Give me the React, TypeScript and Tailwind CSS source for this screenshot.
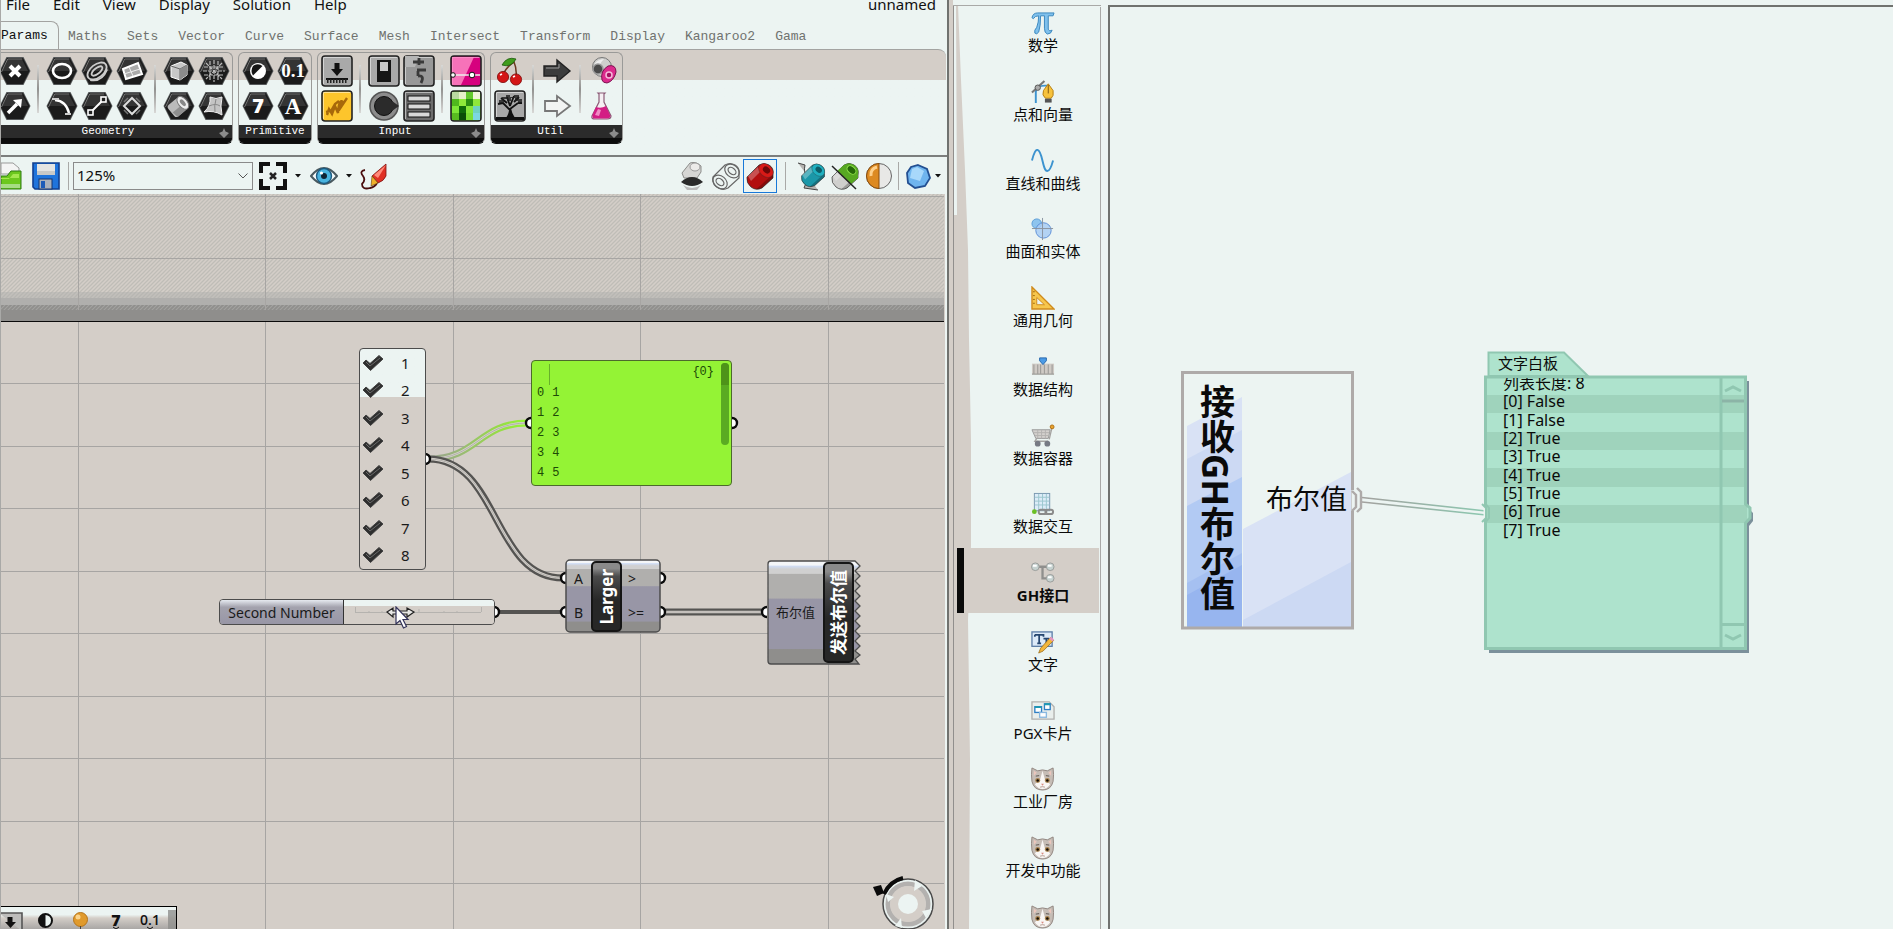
import React, { ReactNode } from "react";

const menuFont = "font-['Noto_Sans','Noto_Sans_CJK_SC',sans-serif]";
const monoFont = "font-['Liberation_Mono',monospace]";

/* ---------- ribbon icons, drawn around the origin ---------- */

function Glyph({ children, label }: { children: ReactNode; label: string }) {
  return (
    <button aria-label={label} className="flex h-[35px] w-[35px] items-center justify-center">
      <svg viewBox="-16 -16 32 32" className="h-8 w-8">{children}</svg>
    </button>
  );
}

function Hex({ children, label }: { children: ReactNode; label: string }) {
  return (
    <Glyph label={label}>
      <polygon points="-15.5,0 -8.5,-14 8.5,-14 15.5,0 8.5,14 -8.5,14" fill="#55585a" />
      <polygon points="-14.6,0 -8,-13 8,-13 14.6,0 8,13 -8,13" fill="#1b1b1b" />
      <polygon points="-13,0 -7,-11.6 7,-11.6 13,0" fill="#343434" />
      <path d="M-13.5,1 L-7.3,-12 H7.3" stroke="#777" fill="none" strokeWidth="1" />
      {children}
    </Glyph>
  );
}

function Tile({ children, label, fill }: { children: ReactNode; label: string; fill: string }) {
  return (
    <Glyph label={label}>
      <rect x="-15" y="-15" width="30" height="30" rx="3" fill={fill} stroke="#222" strokeWidth="1.6" />
      <path d="M-13.5,13 V-13.500 H13.500" stroke="#fff" strokeOpacity=".5" fill="none" />
      {children}
    </Glyph>
  );
}

const geometry: ReactNode[][] = [
  [
    <Hex key="a" label="Point"><path d="M-5,-5 L5,5 M5,-5 L-5,5" stroke="#fff" strokeWidth="4" /></Hex>,
    <Hex key="b" label="Direction"><path d="M-7,7 L2,-2" stroke="#fff" strokeWidth="3.5" /><path d="M-2,-6 L7,-7 L6,2 Z" fill="#fff" /></Hex>,
  ],
  [
    <Hex key="a" label="Circle"><ellipse rx="9" ry="7" fill="none" stroke="#fff" strokeWidth="2.6" /></Hex>,
    <Hex key="b" label="Arc"><path d="M-7,-6 Q4,-5 7,7" stroke="#fff" strokeWidth="2.400" fill="none" /><path d="M-10,-7 H-3 M3,8 H9" stroke="#ccc" strokeWidth="2" /></Hex>,
  ],
  [
    <Hex key="a" label="Curve"><g fill="none" stroke="#ccc" strokeWidth="1.8" transform="rotate(-38)"><ellipse rx="11" ry="6.500" /><ellipse rx="6.5" ry="2.8" /><path d="M-11,3 Q-3,12 9,5" /></g></Hex>,
    <Hex key="b" label="Line"><path d="M-7,7 L7,-7" stroke="#fff" strokeWidth="2" /><g fill="#222" stroke="#fff" strokeWidth="1.6"><rect x="-9" y="4" width="5" height="5" /><rect x="4" y="-9" width="5" height="5" /></g></Hex>,
  ],
  [
    <Hex key="a" label="Plane"><path d="M-9,-2 L6,-8 L10,3 L-6,8 Z" fill="#aaa" stroke="#fff" strokeWidth="2" /><path d="M-3,-4 L1,5 M-8,3 L8,-2" stroke="#eee" /></Hex>,
    <Hex key="b" label="Rectangle"><path d="M0,-8 L8,0 L0,8 L-8,0 Z" fill="none" stroke="#ddd" strokeWidth="2" /><path d="M-8,-4 L-4,-8 M4,-8 L8,-4 M8,4 L4,8 M-4,8 L-8,4" stroke="#777" strokeWidth="1.500" /></Hex>,
  ],
  [
    <Hex key="a" label="Box"><path d="M-8,-5 L2,-9 L8,-6 V4 L1,9 L-8,6 Z" fill="#c8c8c8" stroke="#fff" /><path d="M-8,-5 L1,-2 L8,-6 M1,-2 V9" stroke="#666" fill="none" /><path d="M1,-2 L8,-6 V4 L1,9Z" fill="#8c8c8c" /></Hex>,
    <Hex key="b" label="Brep"><g transform="rotate(-40)"><rect x="-10" y="-7.500" width="15" height="15" rx="3" fill="#bbb" /><path d="M-9,1 H5 V7.500 H-8Z" fill="#8f8f8f" /><ellipse cx="5" rx="4.500" ry="7.500" fill="#eee" stroke="#777" /><ellipse cx="5" rx="2" ry="4" fill="#888" /></g></Hex>,
  ],
  [
    <Hex key="a" label="Mesh"><path d="M-10,-4 H10 M-10,4 H10 M-4,-10 V10 M4,-10 V10 M-8,-8 L8,8 M8,-8 L-8,8 M0,-11 V11 M-11,0 H11" stroke="#bbb" strokeWidth="1.2" strokeDasharray="4 1" /></Hex>,
    <Hex key="b" label="Surface"><path d="M-4,-9 Q2,-6 8,-9 Q6,0 8,9 Q0,4 -10,6 Q-3,0 -4,-9Z" fill="#c4c4c4" stroke="#eee" /><path d="M2,-7 Q0,0 1,6 M-5,0 Q2,-3 6,0" stroke="#888" fill="none" /></Hex>,
  ],
];

const primitive: ReactNode[][] = [
  [
    <Hex key="a" label="Boolean"><circle r="8" fill="#fff" /><path d="M-5,-5 Q0,-8.5 4.5,-5 L-5,4.5 Q-8,0 -5,-5Z" fill="#151515" /></Hex>,
    <Hex key="b" label="Integer"><text y="7" textAnchor="middle" className="font-['Open_Sans',sans-serif] text-[20px] font-extrabold" fill="#fff">7</text></Hex>,
  ],
  [
    <Hex key="a" label="Number"><text y="6" textAnchor="middle" className="font-['Liberation_Serif',serif] text-[19px] font-bold" fill="#fff">0.1</text></Hex>,
    <Hex key="b" label="Text"><text y="8" textAnchor="middle" className="font-['Liberation_Serif',serif] text-[23px] font-bold" fill="#fff">A</text></Hex>,
  ],
];

const greens = ["#b9d9a0", "#e6f0c8", "#63c92c", "#f0f5d8", "#4fb81d", "#8eea3a", "#2a8f12", "#8fe83a", "#7ee637", "#0f6b0a", "#86e83a", "#6fd2c0", "#58bb20", "#0a4f08", "#7adf33", "#7cd7e0"];

const input: ReactNode[][] = [
  [
    <Tile key="a" label="Number slider" fill="#a9a9a9"><path d="M0,-8 V-2" stroke="#111" strokeWidth="5" /><path d="M-6,-2 H6 L0,5Z" fill="#111" /><path d="M-11,8 H11" stroke="#111" strokeWidth="2" /><path d="M-10,10 H11" stroke="#222" strokeWidth="4" strokeDasharray="1.5 1.5" /></Tile>,
    <Tile key="b" label="Graph" fill="#fdc52c"><path d="M-10,9 L-8,3 L-5,8 L-2,0 L1,7 Q2,-8 6,-4 Q-2,6 2,4 L10,-8 M-11,6 L-6,5 L-2,-2 L2,-5" fill="none" stroke="#a8690a" strokeWidth="2.4" /></Tile>,
  ],
  [
    <Tile key="a" label="Switch" fill="#a9a9a9"><rect x="-7" y="-11" width="14" height="22" fill="#151515" /><rect x="-4" y="-9" width="8" height="9" fill="#c9c9c9" /></Tile>,
    <Glyph key="b" label="Knob"><circle r="14" fill="#8c8c8c" stroke="#555" strokeWidth="1.6" /><circle r="9.5" fill="#2b2b2b" stroke="#111" /><path d="M8,-5 L15,0 L8,5Z" fill="#2b2b2b" /></Glyph>,
  ],
  [
    <Tile key="a" label="Panel" fill="#989898"><path d="M-8,-15 H0 L-4,-4 H-14 V-15Z" fill="#b5b5b5" /><path d="M-6,-9 H5 M0,-13 V-6 M-2,-1 H7 M-1,0 V5 M-1,5 Q6,4 2,12" stroke="#3a3a3a" strokeWidth="2.800" fill="none" /></Tile>,
    <Tile key="b" label="Value list" fill="#6d6d6d">{[-10, -2, 6].map((y) => <rect key={y} x="-11" y={y} width="22" height="5" fill="#d8d8d8" stroke="#111" />)}</Tile>,
  ],
  [
    <Tile key="a" label="Gradient" fill="#d6007e"><path d="M-14,-14 H8 L-5,14 H-14Z" fill="#ff8fc8" opacity=".8" /><path d="M-14,4 H14" stroke="#eee" strokeWidth="1.5" /><circle cx="-13" cy="4" r="2.3" fill="#fff" stroke="#111" /><circle cx="6" cy="4" r="2.8" fill="#fff" stroke="#111" /></Tile>,
    <Tile key="b" label="Image" fill="#5cbb22">{greens.map((c, i) => <rect key={i} x={-14 + (i % 4) * 7} y={-14 + Math.floor(i / 4) * 7} width="7" height="7" fill={c} />)}</Tile>,
  ],
];

const util: ReactNode[][] = [
  [
    <Glyph key="a" label="Cherry picker"><path d="M-7,4 Q-4,-4 4,-9 Q7,-2 6,6" fill="none" stroke="#6b3a22" strokeWidth="1.5" /><path d="M-8,-6 Q-3,-15 6,-12 Q1,-3 -8,-6Z" fill="#3f9c1c" stroke="#1d5c0c" strokeWidth=".8" /><circle cx="-7" cy="6" r="5.6" fill="#d41616" stroke="#7b0a0a" strokeWidth=".8" /><circle cx="6" cy="8.5" r="5.6" fill="#d41616" stroke="#7b0a0a" strokeWidth=".8" /><path d="M-10,4 l2,-1 M3,6 l2,-1" stroke="#fff" strokeWidth="1.6" /></Glyph>,
    <Tile key="b" label="Tree" fill="#a8a8a8"><path d="M-14,11 H14 V14 H-14Z" fill="#111" /><path d="M-3,12 Q0,8 0,2 Q1,8 4,12Z M0,4 L-7,-3 M0,3 L8,-3 M0,0 L-3,-9 M0,0 L4,-10 M-3,-3 L-9,-8 M4,-4 L9,-9 M-7,-3 L-12,-2 M8,-3 L12,-3" stroke="#111" strokeWidth="1.800" fill="#111" /><path d="M-11,-6 h3 v-3 h4 v-2 h4 v2 h4 v-2 h5 v4 h3 v4 h-4 v-2 h-3 v-3 h-4 v3 h-4 v-2 h-3 v4 h-5Z" fill="#1d1d1d" opacity=".8" /></Tile>,
  ],
  [
    <Glyph key="a" label="Data input"><path d="M-13,-5 H0 V-11 L13,0 L0,11 V5 H-13Z" fill="#3c3c3c" stroke="#222" strokeWidth="1.4" /><path d="M-11,-3 H2 V-7" stroke="#999" fill="none" /></Glyph>,
    <Glyph key="b" label="Data output"><path d="M-12,-5 H0 V-10 L13,0 L0,10 V5 H-12Z" fill="#f2f4f3" stroke="#777" strokeWidth="1.8" /></Glyph>,
  ],
  [
    <Glyph key="a" label="Colour picker"><g transform="translate(-3 -1)"><circle cx="1" cy="-3" r="9.500" fill="#cfcfcd" stroke="#777" /><path d="M-7,2 Q-9,-10 3,-11 Q-2,-6 -2,-1Z" fill="#eee" /><circle cx="-3" cy="-1" r="5" fill="#4a4a4a" stroke="#999" strokeWidth="1.500" /><path d="M1,10 Q-1,1 7,-4 Q15,-6 15,2 Q13,11 6,13Q2,13 1,10Z" fill="#dc2a8c" stroke="#7d1250" /><circle cx="8" cy="5" r="3" fill="#a30f60" stroke="#f6b9da" strokeWidth="1.500" /></g></Glyph>,
    <Glyph key="b" label="Flask"><g transform="translate(-3 0)"><path d="M-3,-13 H4 L3,-12 V-4 L10,10 Q10,13 6,13 H-6 Q-10,13 -9,10 L-2,-4 V-12Z" fill="#f5eef2" stroke="#8b5a76" strokeWidth="1.2" /><path d="M-5,1 Q0,3 5,0 L9.5,10 Q9,12.5 6,12.5 H-6 Q-9,12.5 -8.5,9Z" fill="#d31d84" /><path d="M-3,3 L0,4 L-2,10 L-6,9Z" fill="#f08cc4" /></g></Glyph>,
  ],
];

function RibbonPanel({ title, groups, plus = true }: { title: string; groups: ReactNode[][][]; plus?: boolean }) {
  return (
    <div className="flex shrink-0 flex-col overflow-hidden rounded-md border border-[#9a9a98] border-b-[#111]">
      <div className="flex h-[72px] px-px">
        {groups.map((cols, i) => (
          <div key={i} className="flex">
            {i > 0 && <span className="mx-[5px] my-3 w-[2px] bg-linear-to-b from-[#d8d8d6] via-[#929290] to-[#d8d8d6]" />}
            {cols.map((col, j) => (
              <div key={j} className="flex flex-col">{col}</div>
            ))}
          </div>
        ))}
      </div>
      <div className={`relative h-[18px] border-b-[5px] border-[#0c0c0c] bg-[#2b2b2b] text-center text-[11px] leading-[13px] text-white ${plus ? "pr-3" : ""} ${monoFont}`}>
        {title}
        {plus && (
          <svg viewBox="0 0 10 10" className="absolute top-[3px] right-[3px] h-[10px] w-[10px]">
            <path d="M5,0 L6.5,3.5 L10,5 L5,10 L0,5 L3.5,3.5Z" fill="#8c8c8c" />
          </svg>
        )}
      </div>
    </div>
  );
}

/* ---------- toolbar ---------- */

function Tool({ label, children, active = false }: { label: string; children: ReactNode; active?: boolean }) {
  return (
    <button aria-label={label} className={`flex h-[34px] w-[34px] items-center justify-center border ${active ? "border-[#1878d8]" : "border-transparent"}`}>
      <svg viewBox="-15 -15 30 30" className="h-[30px] w-[30px] shrink-0">{children}</svg>
    </button>
  );
}

function Caret() {
  return <svg viewBox="0 0 6 4" className="h-1 w-1.5 shrink-0"><path d="M0,0 H6 L3,3.5Z" fill="#111" /></svg>;
}

function Barrel({ body, end, hole }: { body: string; end: string; hole: string }) {
  return (
    <g>
      <path d="M-13,1 L-1,-11 Q4,-14 9,-11 Q14,-8 13,-2 V2 L2,12 Q-4,15 -9,11 Q-14,7 -13,1Z" fill={body} stroke="#2d2d2d" strokeOpacity=".7" />
      <path d="M2,12 L13,2 V-2 L-4,13.500Z" fill="#000" opacity=".25" />
      <path d="M-12,0 L-2,-9 L0,-4 L-9,5Z" fill="#fff" opacity=".28" />
      <ellipse cx="6" cy="-5.500" rx="8" ry="6" transform="rotate(40 6 -5.5)" fill={end} stroke="#2d2d2d" strokeOpacity=".35" />
      <ellipse cx="6.500" cy="-6" rx="4" ry="3" transform="rotate(40 6.5 -6)" fill={hole} />
    </g>
  );
}

function Toolbar() {
  return (
    <div className="flex h-[39px] shrink-0 items-center border-t-2 border-[#7c7e7d] bg-[#ecf4f2]">
      <button aria-label="Open" className="shrink-0">
        <svg viewBox="0 0 21 28" className="h-7 w-[21px]">
          <path d="M0,1 H12 L18,6 V12 H0Z" fill="#f4f4f4" stroke="#999" />
          <path d="M0,14 H6 L10,9 H20 V27 H0Z" fill="#6cc81e" stroke="#2d7a12" />
          <path d="M0,17 H8 L12,12 H18 V16 H0Z" fill="#a4e84f" />
          <path d="M0,22 H19 V26 H0Z" fill="#a6dd84" />
        </svg>
      </button>
      <button aria-label="Save" className="ml-[10px] shrink-0">
        <svg viewBox="0 0 28 28" className="h-7 w-7">
          <path d="M1,1 H27 V27 H3 L1,25Z" fill="#1f74dc" stroke="#123f8f" strokeWidth="1.6" />
          <rect x="5" y="2" width="18" height="11" fill="#e4e4e2" /><path d="M5,9 H23 V13 H5Z" fill="#c9c9c7" />
          <rect x="7" y="17" width="13" height="10" fill="#a9b1bb" stroke="#15356f" /><rect x="9" y="19" width="4" height="7" fill="#1b5bb8" />
        </svg>
      </button>
      <span className="ml-2 h-7 w-px shrink-0 bg-[#a9a9a7]" />
      <div className="relative ml-1 shrink-0">
        <select aria-label="Zoom" className={`h-7 w-[180px] appearance-none border border-[#8a8a8a] bg-transparent pl-[3px] text-[15px] text-[#111] ${menuFont}`}>
          <option>125%</option>
        </select>
        <svg viewBox="0 0 10 6" className="pointer-events-none absolute top-[11px] right-[5px] h-1.5 w-2.5"><path d="M0.5,0.5 L5,5 L9.5,0.5" fill="none" stroke="#555" /></svg>
      </div>
      <button aria-label="Zoom extents" className="ml-1.5 mr-2 shrink-0">
        <svg viewBox="0 0 28 28" className="h-7 w-7">
          <path d="M2,11 V2 H11 M17,2 H26 V11 M26,17 V26 H17 M11,26 H2 V17" fill="none" stroke="#111" strokeWidth="4" />
          <path d="M11,11 L17,17 M17,11 L11,17" stroke="#222" strokeWidth="2.5" />
        </svg>
      </button>
      <Caret />
      <button aria-label="Preview" className="ml-[9px] mr-2 shrink-0">
        <svg viewBox="0 0 28 28" className="h-7 w-7">
          <path d="M1,14 Q14,-2 27,14 Q14,30 1,14Z" fill="#f5fafa" stroke="#4a5a60" strokeWidth="2" />
          <circle cx="14" cy="14" r="7.5" fill="#49b4e0" stroke="#1d5b80" strokeWidth="1.4" /><circle cx="14" cy="14" r="3" fill="#0f2435" /><circle cx="11.5" cy="11" r="1.6" fill="#fff" />
        </svg>
      </button>
      <Caret />
      <button aria-label="Sketch" className="ml-2 shrink-0">
        <svg viewBox="0 0 28 28" className="h-7 w-7">
          <path d="M5,8 Q-1,9 3,14 Q6,18 2,22 Q2,28 10,26 Q15,25 17,21" fill="none" stroke="#4a0d0d" strokeWidth="1.800" />
          <path d="M12,14 L26,2 V14 Q24,19 18,21Z" fill="#e03024" stroke="#7d1212" strokeWidth=".8" /><path d="M14,13 L26,3 L18,16Z" fill="#ff8a7a" />
          <path d="M12,14 L18,21 L11,24 Z" fill="#f0b02a" stroke="#603a0a" strokeWidth=".6" />
        </svg>
      </button>
      <div className="ml-auto flex shrink-0 items-center pr-[6px]">
        <Tool label="No preview">
          <path d="M-10,-3 L-2,-13 Q4,-15 9,-10 V-4 L5,2 H-8Z" fill="#d6d6d4" stroke="#8c8c8a" /><ellipse cx="3" cy="-9" rx="5" ry="4" fill="#ecebe9" stroke="#999" />
          <path d="M-11,6 Q0,-4 11,6 Q0,14 -11,6Z" fill="#2a2a2a" /><path d="M-9,9 Q0,15 9,9 L5,14 H-5Z" fill="#bbb" />
        </Tool>
        <Tool label="Wireframe preview">
          <g fill="none" stroke="#666" strokeWidth="1.2">
            <path d="M-13,1 L-1,-11 Q4,-14 9,-11 Q14,-8 13,-2 V2 L2,12 Q-4,15 -9,11 Q-14,7 -13,1Z" />
            <ellipse cx="6" cy="-5" rx="8" ry="6" transform="rotate(40 6 -5)" /><ellipse cx="6" cy="-5" rx="4.500" ry="3" transform="rotate(40 6 -5)" />
            <ellipse cx="-6" cy="6" rx="8" ry="6" transform="rotate(40 -6 6)" /><ellipse cx="-6" cy="6" rx="4.500" ry="3" transform="rotate(40 -6 6)" />
          </g>
        </Tool>
        <Tool label="Shaded preview" active><Barrel body="#b30f0f" end="#d81a17" hole="#6e0808" /></Tool>
        <span className="mx-2 h-7 w-px bg-[#a9a9a7]" />
        <Tool label="Selected only"><path d="M-13,-13 L-6,-11 Q-8,-3 -3,2 L-7,12 L7,14" fill="#b5b3b0" stroke="#444" /><g transform="translate(2 -1) scale(.88)"><Barrel body="#1b97a8" end="#1fb0c0" hole="#0c5d68" /></g></Tool>
        <Tool label="Document preview"><Barrel body="#cfcfcd" end="#5cb81e" hole="#2c6b0c" /><path d="M-8,-5 L-1,-11 Q4,-14 9,-11 Q14,-8 13,-2 V2 L6,8Z" fill="#57a822" /><ellipse cx="6.500" cy="-6" rx="5" ry="3.500" transform="rotate(40 6.5 -6)" fill="#276909" stroke="#8fe04a" /><path d="M-13,-10 L11,13" stroke="#222" strokeWidth="1.5" /></Tool>
        <Tool label="Preview settings"><circle r="12.5" fill="#e8e8e6" stroke="#666" /><path d="M0,-12.5 A12.5,12.5 0 0 0 0,12.5Z" fill="#dd8a22" stroke="#8a4d0c" /><path d="M-2,-9 Q-9,-7 -8,0" stroke="#ffd08a" strokeWidth="3" fill="none" /></Tool>
        <span className="mx-[2px] h-7 w-px bg-[#a9a9a7]" />
        <Tool label="Mesh quality"><path d="M0,-11 L9,-7 L12,2 L7,10 L-3,12 L-10,7 L-11,-3 L-7,-9Z" fill="#6fb4ee" stroke="#234f91" strokeWidth="1.8" /><path d="M-1,-9 L6,-5 L2,5 L-8,2 L-6,-7Z" fill="#a8d8fb" /></Tool>
        <Caret />
      </div>
    </div>
  );
}

/* ---------- left canvas ---------- */

function Port({ x, y, side }: { x: number; y: number; side: "l" | "r" }) {
  const d = side === "l" ? `M${x},${y - 5} A5,5 0 0 0 ${x},${y + 5}` : `M${x},${y - 5} A5,5 0 0 1 ${x},${y + 5}`;
  return <path d={d} fill="#fff" stroke="#0a0a0a" strokeWidth="2.4" />;
}

function DoubleWire({ d, stroke }: { d: string; stroke: string }) {
  return (
    <g fill="none">
      <path d={d} stroke={stroke} strokeWidth="7" />
      <path d={d} stroke="#d6d2cd" strokeWidth="2.4" />
      <path d={d} stroke="#9b9995" strokeWidth=".6" />
    </g>
  );
}

const gridX = [78, 265, 453, 640, 828];
const gridY = [196, 258, 383, 446, 508, 571, 633, 696, 758, 821, 883];
const zigzag = "l5,5 l-5,5 l5,5 l-5,5 l5,5 l-5,5 l5,5 l-5,5 l5,5 l-5,5 l5,5 l-5,5 l5,5 l-5,5 l5,5 l-5,5 l5,5 l-5,5 l5,4 l-5,4";

function CanvasBackdrop() {
  return (
    <svg className="absolute inset-0 h-full w-full">
      <defs>
        <pattern id="hatch" width="4" height="4" patternUnits="userSpaceOnUse">
          <path d="M-1,1 L1,-1 M0,4 L4,0 M3,5 L5,3" stroke="#bfbdb7" strokeWidth="1.3" />
        </pattern>
        <pattern id="hatchDark" width="4" height="4" patternUnits="userSpaceOnUse">
          <path d="M-1,1 L1,-1 M0,4 L4,0 M3,5 L5,3" stroke="#8f8e8c" strokeWidth="1.8" />
        </pattern>
        <linearGradient id="toGreen" gradientUnits="userSpaceOnUse" x1="426" y1="0" x2="526" y2="0">
          <stop offset="0" stopColor="#9a9d96" /><stop offset=".4" stopColor="#9abf70" /><stop offset=".7" stopColor="#97d94a" /><stop offset="1" stopColor="#94f335" />
        </linearGradient>
        <linearGradient id="body" x1="0" y1="0" x2="0" y2="1">
          <stop offset="0" stopColor="#f4f6f8" /><stop offset=".04" stopColor="#f4f6f8" /><stop offset=".05" stopColor="#cfdcf4" /><stop offset=".08" stopColor="#d0d0d0" /><stop offset=".12" stopColor="#d0d0d0" /><stop offset=".13" stopColor="#b0afad" /><stop offset=".36" stopColor="#b0afad" /><stop offset=".37" stopColor="#9896a6" /><stop offset=".85" stopColor="#9896a6" /><stop offset=".86" stopColor="#8f8e8c" /><stop offset="1" stopColor="#8f8e8c" />
        </linearGradient>
      </defs>
      <g transform="translate(-1 -194)">
        <rect x="0" y="194" width="100%" height="128" fill="url(#hatch)" />
        <rect x="0" y="292" width="100%" height="6" fill="#b0afad" opacity=".5" />
        <rect x="0" y="298" width="100%" height="7" fill="#b0afad" />
        <rect x="0" y="305" width="100%" height="5" fill="#a3a2a0" />
        <rect x="0" y="305" width="100%" height="5" fill="url(#hatchDark)" />
        <g fill="#a7a5a3">
          {gridX.map((x) => <rect key={x} x={x} y="194" width="1" height="4000" />)}
          {gridY.map((y) => <rect key={y} x="0" y={y} width="100%" height="1" />)}
        </g>
        <rect x="0" y="310" width="100%" height="11" fill="#8f8e8c" />
        <rect x="0" y="321" width="100%" height="1" fill="#0a0a0a" />

        <DoubleWire d="M428,459 C478,459 478,423 528,423" stroke="url(#toGreen)" />
        <DoubleWire d="M428,459 C500,459 492,578 563,578" stroke="#555452" />
        <path d="M497,612 H562" stroke="#555452" strokeWidth="4" />
        <DoubleWire d="M664,612 H764" stroke="#555452" />

        <Port x={425} y={459} side="r" />
        <Port x={531} y={423} side="l" />
        <Port x={732} y={423} side="r" />
        <Port x={494} y={612} side="r" />
        <Port x={566} y={578} side="l" />
        <Port x={566} y={612} side="l" />
        <Port x={660} y={578} side="r" />
        <Port x={660} y={612} side="r" />
        <Port x={767} y={612} side="l" />

        <rect x="566" y="560" width="94" height="72" rx="4" fill="url(#body)" stroke="#4c4c4c" strokeWidth="1.5" />
        <path d={`M771,561 H855 ${zigzag} L859,664 H771 Q768,664 768,661 V564 Q768,561 771,561Z`} fill="url(#body)" stroke="#4c4c4c" strokeWidth="1.3" />

        <g>
          <circle cx="908" cy="904" r="25" fill="#e9f1ef" stroke="#4a4a4a" strokeWidth="1.5" />
          <circle cx="908" cy="904" r="20" fill="none" stroke="#b3b1af" strokeWidth="5" />
          <circle cx="908" cy="904" r="18" fill="#d4cec8" />
          <circle cx="908" cy="904" r="10" fill="#ecf4f2" />
          <path d="M915,880 L922,886 L914,891Z M932,909 L926,918 L922,911Z M902,928 L895,926 L901,918Z M886,894 L894,897 L888,902Z" fill="#ecf4f2" />
          <path d="M884,894 Q890,881 903,878" fill="none" stroke="#0a0a0a" strokeWidth="4" />
          <path d="M873,887 L881,885 L884,893 L877,896Z" fill="#0a0a0a" />
        </g>
      </g>
    </svg>
  );
}

function CheckList() {
  return (
    <div className="absolute top-[154px] left-[358px] flex h-[222px] w-[67px] flex-col rounded border border-[#4c4c4c] bg-linear-to-b from-[#ecf4f2] from-[22%] to-[#d4cec8] to-[22%]">
      {[1, 2, 3, 4, 5, 6, 7, 8].map((n) => (
        <label key={n} className={`flex flex-1 items-center text-[15px] text-[#1a1a1a] ${menuFont}`}>
          <span className="relative ml-[2px] h-4 w-[22px]">
            <input type="checkbox" defaultChecked className="absolute inset-0 appearance-none" />
            <svg viewBox="0 0 22 16" className="pointer-events-none h-4 w-[22px]">
              <path d="M1,8 L4,5 L8,8.5 L17,0.5 L21,4 L8.5,15.5Z" fill="#2e2e2e" stroke="#444" />
              <path d="M4,7 L8,11 L18,3" stroke="#6a6a6a" fill="none" />
            </svg>
          </span>
          <span className="ml-[17px]">{n}</span>
        </label>
      ))}
    </div>
  );
}

function GreenPanel() {
  return (
    <div className={`absolute top-[166px] left-[530px] h-[126px] w-[201px] rounded border border-[#4c6a2c] bg-[#94f335] text-[12px] text-[#1d4a06] ${monoFont}`}>
      <div className="flex h-[21px] items-center justify-end pr-[17px] leading-none">
        {"{0}"}
      </div>
      <span className="absolute top-[3px] left-[17px] h-[21px] w-px bg-[#67b02a]" />
      <ul className="pt-px">
        {[0, 1, 2, 3, 4].map((i) => (
          <li key={i} className="flex h-5 items-center gap-2 pl-[5px]">
            <span>{i}</span>
            <span>{i + 1}</span>
          </li>
        ))}
      </ul>
      <div className="absolute top-[2px] right-[2px] h-[82px] w-[8px] overflow-hidden rounded bg-[#5aab22]">
        <div className="h-[22px] bg-[#4e9319]" />
      </div>
    </div>
  );
}

function NodeLabel({ children }: { children: ReactNode }) {
  return (
    <span className="flex w-[31px] items-center justify-center rounded-[5px] border-2 border-[#151515] bg-linear-to-b from-[#8a8a8a] from-[8%] via-[#4b4b4b] via-[20%] to-[#272727] to-[56%]">
      <span className="rotate-180 text-[17px] leading-none font-bold whitespace-nowrap text-white [text-orientation:sideways] [writing-mode:vertical-rl]">{children}</span>
    </span>
  );
}

function LeftCanvas() {
  return (
    <div className={`relative mr-[2px] min-h-0 flex-1 overflow-hidden bg-[#d4cec8] ${menuFont}`}>
      <CanvasBackdrop />
      <CheckList />
      <GreenPanel />

      <div className="absolute top-[405px] left-[218px] flex h-[26px] w-[276px] overflow-hidden rounded border border-[#4c4c4c]">
        <label htmlFor="second-number" className="flex w-[124px] items-center justify-center border-r border-[#333] bg-linear-to-b from-[#e6eaf0] via-[#a3a2ad] via-[30%] to-[#9896a6] text-[14px] text-[#1a1a1a]">
          Second Number
        </label>
        <div className="relative flex-1 bg-linear-to-b from-[#ecf4f2] from-[24%] to-[#d4cec8] to-[24%]">
          <svg viewBox="0 0 150 24" className="absolute inset-0 h-6 w-[150px]">
            <path d="M11,12.5 H137 M11.5,7 V12 M137.5,7 V12 M25,11 V12 M38,11 V12 M75,9 V12 M100,11 V12 M113,11 V12" stroke="#b5b3af" fill="none" />
          </svg>
          <input id="second-number" type="range" min="0" max="10" defaultValue="3" className="absolute inset-0 h-full w-full opacity-0" />
        </div>
      </div>

      <div className="absolute top-[367px] left-[565px] flex h-[71px] w-[94px] text-[14px] text-[#1a1a1a]">
        <div className="flex w-[25px] flex-col pt-px text-center leading-[34px]"><span>A</span><span>B</span></div>
        <NodeLabel>Larger</NodeLabel>
        <div className="flex flex-col pt-px pl-[6px] leading-[34px]"><span>&gt;</span><span>&gt;=</span></div>
      </div>

      <div className="absolute top-[368px] left-[767px] flex h-[101px] w-[86px] text-[13px] text-[#1a1a1a]">
        <span className="flex w-[55px] items-center justify-center">布尔值</span>
        <NodeLabel>发送布尔值</NodeLabel>
      </div>

      <svg viewBox="0 0 30 24" className="absolute top-[412px] left-[385px] h-6 w-[30px]">
        <path d="M1,6 L7,2 V5 H21 V2 L28,6 L21,11 V8 H7 V11Z" fill="#e8e8e6" stroke="#222" strokeWidth="1.2" />
        <path d="M10,1 V18 L14,14.5 L17.5,22 L20.5,20.5 L17,13.5 H22Z" fill="#fff" stroke="#33335a" strokeWidth="1.2" />
      </svg>

      <div className="absolute bottom-0 left-0 flex h-[23px] w-[176px] overflow-hidden border-t border-r border-black bg-linear-to-b from-[#ecf4f2] from-[35%] via-[#d4cec8] via-[50%] to-[#a9a7a5]">
        <svg viewBox="0 0 175 22" className="h-[22px] w-[175px]">
          <path d="M-2,6 H21 V24" fill="#bdbdbb" stroke="#555" strokeWidth="1.6" />
          <path d="M9,10 V16" stroke="#111" strokeWidth="5" /><path d="M4,15 H15 L9.500,21Z" fill="#111" />
          <circle cx="44.500" cy="13.500" r="6.500" fill="#ecf4f2" stroke="#111" strokeWidth="2" /><path d="M44.500,7 A6.500,6.500 0 0 0 44.500,20Z" fill="#111" />
          <circle cx="79.500" cy="12.500" r="7" fill="#e09a2c" stroke="#b5741a" /><circle cx="77" cy="10" r="2.500" fill="#fbd48c" /><path d="M79.500,19 V22" stroke="#444" />
          <text x="115" y="19" textAnchor="middle" className="font-['Open_Sans',sans-serif] text-[16px] font-extrabold" fill="#111">7</text>
          <text x="149" y="18" textAnchor="middle" className="font-['Open_Sans',sans-serif] text-[14px] font-semibold" fill="#111">0.1</text>
          <path d="M112,20 l3,2 l3,-2 M146,20 l3,2 l3,-2" stroke="#111" fill="none" />
          <rect x="167" y="3" width="9" height="19" fill="#8f8e8c" opacity=".8" />
        </svg>
      </div>
    </div>
  );
}

function LeftWindow() {
  const tabs = ["Maths", "Sets", "Vector", "Curve", "Surface", "Mesh", "Intersect", "Transform", "Display", "Kangaroo2", "Gama"];
  return (
    <section className="flex min-w-0 flex-col overflow-hidden border-r-2 border-l border-r-[#70726f] border-l-[#a9a9a7] bg-[#ecf4f2]">
      <nav className={`flex h-[21px] shrink-0 items-start pr-[11px] pl-[5px] text-[15px] leading-[22px] text-[#111] ${menuFont}`}>
        <div className="-mt-[7px] flex w-full gap-[23px]">
          {["File", "Edit", "View", "Display", "Solution", "Help"].map((m) => <button key={m}>{m}</button>)}
          <span className="ml-auto">unnamed</span>
        </div>
      </nav>
      <div className={`flex h-[28px] shrink-0 items-center text-[13px] leading-[28px] text-[#70726f] ${monoFont}`}>
        <button className="h-[28px] w-[58px] shrink-0 rounded-tr-lg border-t border-r border-[#a3a3a1] pb-1 text-left leading-[27px] text-[#111]">Params</button>
        <div className="flex gap-[20px] pt-[4px] pl-[9px]">
          {tabs.map((t) => <button key={t}>{t}</button>)}
        </div>
      </div>
      <div className="mr-px flex h-[106px] shrink-0 rounded-tr-lg border-t border-[#a3a3a1] bg-linear-to-b from-[#d4cec8] from-[30px] to-[#ecf4f2] to-[30px] pt-[2px]">
        <div className="-ml-[6px] flex items-start gap-[5px]">
          <RibbonPanel title="Geometry" groups={[[geometry[0]], geometry.slice(1, 4), geometry.slice(4)]} />
          <RibbonPanel title="Primitive" groups={[primitive]} plus={false} />
          <RibbonPanel title="Input" groups={[[input[0]], input.slice(1, 3), [input[3]]]} />
          <RibbonPanel title="Util" groups={[[util[0]], [util[1]], [util[2]]]} />
        </div>
      </div>
      <Toolbar />
      <LeftCanvas />
    </section>
  );
}

/* ---------- category list ---------- */

const cat = (
  <g>
    <path d="M1,1 L7,4 Q12,2 17,4 L23,1 Q24,8 23,15 Q21,24 12,24 Q3,24 1,15 Q0,8 1,1Z" fill="#c6bdb6" stroke="#90857f" />
    <path d="M3,4 L6,6 L3,9Z M21,4 L18,6 L21,9Z" fill="#ecc6bd" />
    <path d="M12,4 L14.500,13 L20,18 Q17,23 12,23 Q7,23 4,18 L9.500,13Z" fill="#f9f6f4" />
    <circle cx="7" cy="14" r="2.600" fill="#a88350" /><circle cx="17" cy="14" r="2.600" fill="#a88350" />
    <circle cx="7" cy="14" r="1.300" fill="#120c05" /><circle cx="17" cy="14" r="1.300" fill="#120c05" />
    <path d="M10.500,17.500 H13.500 L12,19.500Z" fill="#d88a80" /><path d="M9.500,21 Q12,20 14.500,21" stroke="#a08074" strokeWidth=".8" fill="none" />
    <path d="M5,9.500 L8.500,9 M15.500,9 L19,9.500" stroke="#5a524d" strokeWidth="1" />
  </g>
);

const categories: { name: string; icon: ReactNode }[] = [
  { name: "数学", icon: <path d="M1,7 Q2,2 7,2 H24 L23,5 H18 V19 Q19,22 22,20 Q21,24 17,24 Q14,23 14,18 V5 H10 Q10,16 8,22 Q6,25 4,23 Q3,20 6,17 Q8,12 8,5 Q4,5 2.500,8Z" fill="#7fc0ec" stroke="#3a86bd" /> },
  { name: "点和向量", icon: <g><path d="M5,24 V12 Q6,5 17,6" fill="none" stroke="#3d93cf" strokeWidth="2" /><path d="M1,13 L14,1" stroke="#777" strokeWidth="2.2" /><circle cx="7" cy="8" r="2.800" fill="#aaa" stroke="#555" /><path d="M18,4 L23,11 Q24,17 21,19 H15 Q11,16 13,11Z" fill="#f7c23c" stroke="#b57e14" /><path d="M18,5 V14" stroke="#7d5510" /><rect x="14.500" y="19.500" width="7" height="4" fill="#555" /></g> },
  { name: "直线和曲线", icon: <path d="M1,12 Q4,0 7,1 C12,2 12,23 17,23 Q20,23 23,12" fill="none" stroke="#3d93cf" strokeWidth="2" /> },
  { name: "曲面和实体", icon: <g><circle cx="6" cy="7" r="5" fill="#8ec4ee" stroke="#5c9ed6" /><circle cx="13" cy="14" r="8" fill="#a9cdf4" fillOpacity=".85" stroke="#5c8ed6" /><path d="M12,1 V24 M1,12 H23" stroke="#8a93a0" /></g> },
  { name: "通用几何", icon: <g><path d="M1,1 L24,24 H1Z" fill="#f7c64c" stroke="#cf8a1c" strokeWidth="1.4" /><path d="M6,12 L14,19.500 H6Z" fill="#ecf4f2" stroke="#cf8a1c" /><path d="M2,6 H4 M2,10 H4 M2,14 H4 M2,18 H4" stroke="#a06a10" /></g> },
  { name: "数据结构", icon: <g><path d="M1,9 H24 V20 H1Z" fill="#cfcac5" /><path d="M1,20 H24 M3,10 V20 M7,10 V20 M10,10 V20 M14,10 V20 M18,10 V20 M22,10 V20" stroke="#a09e9b" strokeWidth="1.2" /><path d="M9,3 H16 V6 L12.500,10 L9,6Z" fill="#4b9be6" stroke="#2565ab" /></g> },
  { name: "数据容器", icon: <g><path d="M1,6 H20 L18,15 H5Z" fill="#d3d0cd" stroke="#999" /><path d="M3,9 H19 M4,12 H18 M7,6 V15 M11,6 V15 M15,6 V15" stroke="#b5b3b1" /><path d="M18,18 H4 L6,15 M19,16 L22,3" fill="none" stroke="#a5a3a1" strokeWidth="1.4" /><circle cx="22" cy="3" r="2" fill="#e8a32c" stroke="#b06c10" /><circle cx="7" cy="20.500" r="3" fill="#777a84" /><circle cx="17" cy="20.500" r="3" fill="#777a84" /></g> },
  { name: "数据交互", icon: <g><rect x="3.500" y="1.500" width="16" height="18" fill="#dcecf8" stroke="#7a98b0" /><path d="M4,5.500 H19 M4,9.500 H19 M4,13.500 H19 M8,2 V19 M12,2 V19 M16,2 V19" stroke="#9cc7cf" /><circle cx="3.500" cy="20.500" r="2.500" fill="#6abf25" /><g fill="none" stroke="#8a8a8a" strokeWidth="2"><rect x="8" y="18.500" width="8" height="4.500" rx="2.200" /><rect x="15" y="18.500" width="8" height="4.500" rx="2.200" /></g></g> },
  { name: "GH接口", icon: <g><path d="M6,6 H18 M12,6 V18 H18" fill="none" stroke="#8f8f8d" strokeWidth="2.400" /><circle cx="4.500" cy="6" r="4" fill="#c6d2d0" stroke="#9a9c9a" /><circle cx="20" cy="6" r="4" fill="#c6d2d0" stroke="#9a9c9a" /><circle cx="20" cy="18" r="4" fill="#c6d2d0" stroke="#9a9c9a" /><path d="M2,5 h4 M17.500,5 h4 M17.500,17 h4" stroke="#fff" strokeWidth="2" /></g> },
  { name: "文字", icon: <g><rect x="1" y="2" width="21" height="15" fill="#dceaf8" stroke="#5e7fa8" strokeWidth="1.400" /><path d="M4,5 H13 V7 M8.500,5 V14 M4,5 V7 M6.500,14 H10.500 M13,9 H19 M16,9 V14" stroke="#25466f" strokeWidth="1.800" fill="none" /><path d="M8,24 L10,19 L20,8 L23.500,11 L12.500,22Z" fill="#f3b63c" stroke="#9a6a14" strokeWidth=".8" /><path d="M19,9 L21,7 L24,10 L22.500,12Z" fill="#e596c0" /></g> },
  { name: "PGX卡片", icon: <g><path d="M1,3 H19 L24,8 V21 H1Z" fill="#e9eeec" stroke="#b0b0ae" strokeWidth="1.400" /><g fill="#fff" stroke="#2f7fc4" strokeWidth="1.400"><rect x="4" y="8" width="7" height="6" /><rect x="14" y="5" width="6" height="6" /><rect x="9" y="14" width="7" height="5" stroke="#8ab8e0" /></g><path d="M4,8.500 H11 M14,5.500 H20" stroke="#1e9ab0" strokeWidth="2" /></g> },
  { name: "工业厂房", icon: cat },
  { name: "开发中功能", icon: cat },
  { name: "", icon: cat },
];

function CategoryList() {
  return (
    <nav className="relative w-[152px] shrink-0 overflow-hidden">
      <svg className="absolute inset-0 h-full w-full">
        <path d="M0,0 H4 V2000 H0Z" fill="#d4cec8" />
        <path d="M7,5 L9,5 L12,80 L16,170 L19,250 L20,340 L22,440 L22,545 L19,620 L21,760 L20,930 V2000 H5 V215 H8Z" fill="#d4cec8" />
        <rect x="4" y="5" width="1" height="2000" fill="#918f8d" />
        <rect x="4" y="5" width="149" height="1" fill="#a9a9a7" />
        <rect x="151" y="7" width="1" height="2000" fill="#a9a9a7" />
      </svg>
      <div className="relative -mt-[2px] mr-[2px] ml-2 flex h-[959px] flex-col justify-between">
        {categories.map((c, i) => {
          const on = c.name === "GH接口";
          return (
            <button key={i} aria-label={c.name || "更多"} className={`flex h-[65px] shrink-0 flex-col items-center pt-[13px] pl-[23px] ${on ? "border-l-[7px] border-[#0a0a0a] bg-[#d4cec8]" : "border-l-[7px] border-transparent"}`}>
              <svg viewBox="0 0 25 25" className="h-6 w-6 shrink-0">{c.icon}</svg>
              <span className={`h-5 text-[15px] leading-5 whitespace-nowrap text-[#0a0a0a] ${on ? "font-bold" : ""}`}>{c.name}</span>
            </button>
          );
        })}
      </div>
    </nav>
  );
}

/* ---------- right canvas ---------- */

const board = ["列表长度: 8", "[0] False", "[1] False", "[2] True", "[3] True", "[4] True", "[5] True", "[6] True", "[7] True"];

function RightCanvas() {
  return (
    <main className="relative mt-[5px] ml-[7px] min-w-0 flex-1 overflow-hidden border-t-2 border-l-2 border-[#70726f] bg-[#ecf4f2]">
      <svg className="absolute inset-0 h-full w-full">
        <defs>
          <linearGradient id="link" gradientUnits="userSpaceOnUse" x1="1362" y1="0" x2="1486" y2="0"><stop offset="0" stopColor="#a3a19f" /><stop offset="1" stopColor="#8cc8b0" /></linearGradient>
        </defs>
        <g transform="translate(-1110 -7)">
          <rect x="1183" y="373" width="169" height="254" fill="#ecf4f2" />
          <path d="M1243,529 L1351,472 V627 H1243Z" fill="#d9e2f5" />
          <path d="M1243,620 L1351,562 V627 H1243Z" fill="#ccd9f3" />
          <path d="M1187,426 L1242,397 V627 H1187Z" fill="#d9e2f5" />
          <path d="M1187,459 L1242,430 V627 H1187Z" fill="#ccd9f3" />
          <path d="M1187,506 L1242,477 V627 H1187Z" fill="#b2caf3" />
          <path d="M1187,583 L1242,553 V627 H1187Z" fill="#a5c0f1" />
          <path d="M1187,595 L1242,565 V627 H1187Z" fill="#97b5ef" />
          <rect x="1182.500" y="372.500" width="170" height="255.500" fill="none" stroke="#aeaaa9" strokeWidth="3" />
          <path d="M1354,490 V511" stroke="#ecf4f2" strokeWidth="5" />
          <path d="M1352,491 L1356,495 V507 L1352,511 M1357,488 L1361,492 V508 L1357,512" fill="none" stroke="#aeaaa9" strokeWidth="2.400" />
          <path d="M1362,497.500 L1486,511 M1362,502 L1486,515" stroke="url(#link)" strokeWidth="1.600" fill="none" />

          <path d="M1489,381 H1749 V509 L1753,513 V521 L1749,526 V653 H1489Z" fill="#7b909b" />
          <path d="M1488.500,376 V352.500 H1564 L1588,376Z" fill="#aee3cd" stroke="#90c7b1" strokeWidth="2" />
          <path d="M1485.500,377 H1745.500 V504 L1750,508 V518 L1745.500,523 V648.500 H1485.500Z" fill="#aee3cd" />
          <path d="M1486,395 H1745 V413 H1486Z M1486,432 H1745 V450 H1486Z M1486,468 H1745 V487 H1486Z M1486,505 H1747 V523 H1486Z" fill="#9fd3bc" />
          <path d="M1485.500,377 H1745.500 V504 L1750,508 V518 L1745.500,523 V648.500 H1485.500Z" fill="none" stroke="#90c7b1" strokeWidth="3" />
          <path d="M1721,377 V648 M1721,624.500 H1745" stroke="#90c7b1" strokeWidth="3" />
          <path d="M1722,401 H1744" stroke="#8cb4a7" strokeWidth="3" />
          <path d="M1725,391 L1733,387 L1741,391 M1725,635 L1733,639 L1741,635" fill="none" stroke="#90c7b1" strokeWidth="3" />
          <path d="M1482,506 L1485,509 V517 L1482,520" stroke="#ecf4f2" strokeWidth="3" fill="none" />
          <path d="M1482,504 L1486,508 V518 L1482,522 M1485,503 L1489,508 V518 L1485,523" stroke="#90c7b1" strokeWidth="2" fill="none" />
        </g>
      </svg>

      <div className="absolute top-[362px] left-[71px] flex h-[258px] w-[172px] items-center pl-[16px]">
        <h2 className="text-[35px] leading-[36px] font-bold text-[#0a0a0a] [writing-mode:vertical-rl]">接收GH布尔值</h2>
        <span className="ml-auto pr-[6px] text-[27px] leading-none whitespace-nowrap text-[#0a0a0a]">布尔值</span>
      </div>

      <div className="absolute top-[344px] left-[376px] w-[240px] text-[#0a0a0a]">
        <h3 className="h-[27px] pl-[12px] text-[15px] leading-[24px]">文字白板</h3>
        <ul className="flex h-[165px] flex-col overflow-hidden pl-[17px] text-[16px]">
          {board.map((t) => <li key={t} className="min-h-0 flex-1 leading-[10px] whitespace-pre">{t}</li>)}
        </ul>
      </div>
    </main>
  );
}

export default function App() {
  return (
    <div className="grid h-screen grid-cols-[949fr_944fr] overflow-hidden bg-[#ecf4f2]">
      <LeftWindow />
      <section className={`flex min-w-0 overflow-hidden bg-[#ecf4f2] ${menuFont}`}>
        <CategoryList />
        <RightCanvas />
      </section>
    </div>
  );
}
